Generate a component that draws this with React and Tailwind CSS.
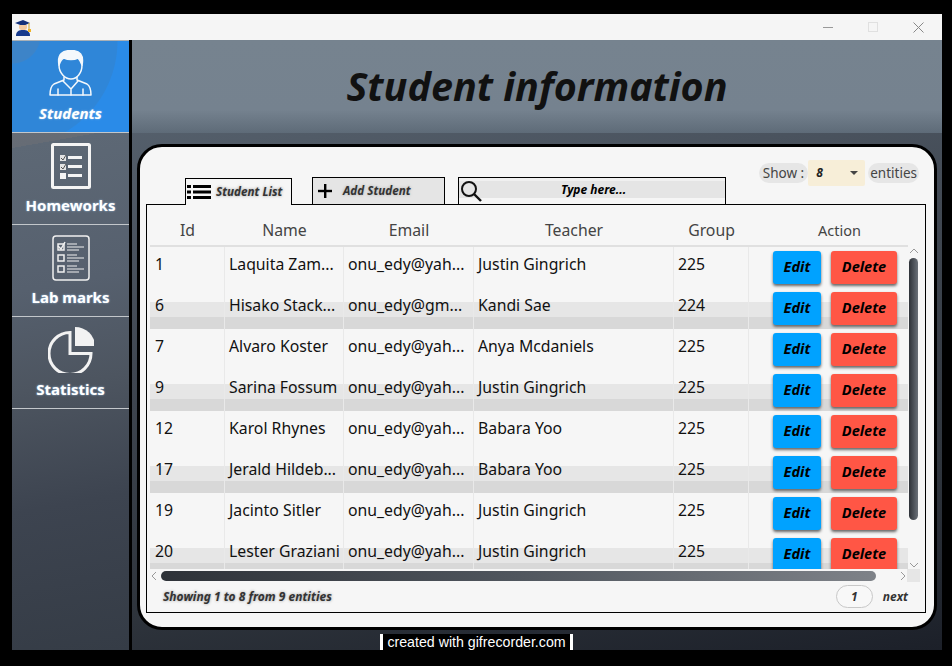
const rows = [
  ["1", "Laquita Zam...", "onu_edy@yah...", "Justin Gingrich", "225"],
  ["6", "Hisako Stack...", "onu_edy@gm...", "Kandi Sae", "224"],
  ["7", "Alvaro Koster", "onu_edy@yah...", "Anya Mcdaniels", "225"],
  ["9", "Sarina Fossum", "onu_edy@yah...", "Justin Gingrich", "225"],
  ["12", "Karol Rhynes", "onu_edy@yah...", "Babara Yoo", "225"],
  ["17", "Jerald Hildeb...", "onu_edy@yah...", "Babara Yoo", "225"],
  ["19", "Jacinto Sitler", "onu_edy@yah...", "Justin Gingrich", "225"],
  ["20", "Lester Graziani", "onu_edy@yah...", "Justin Gingrich", "225"],
];

const cols = "grid grid-cols-[75px_119px_130px_200px_75px_159px]";

function CapIcon() {
  return (
    <svg width="18" height="17" viewBox="0 0 18 17">
      <path d="M1 4 L9 1 L16 4 L9 7 Z" fill="#12307a" />
      <path d="M5 6 L13 6 L13 9 C12 12 6 12 5 9 Z" fill="#f1c9a0" />
      <path d="M2 17 C2 12 5 11 9 11 C13 11 16 12 16 17 Z" fill="#173a8c" />
      <path d="M15 4 L15 10" stroke="#c9a227" strokeWidth="1" />
      <rect x="14" y="10" width="3" height="3" fill="#f0b429" />
    </svg>
  );
}

function StudentIcon() {
  return (
    <svg width="44" height="46" viewBox="0 0 44 46" fill="none" stroke="#f4f8fc" strokeWidth="1.5" strokeLinejoin="round" strokeLinecap="round">
      <path d="M10 15 C10 23 16 29 22 29 C28 29 33 23 33 15" />
      <path d="M10 15 C8 4 14 0.5 22 0.5 C31 0.5 35 5 33 15 C32 12 31 10 29 8 C25 10 19 10 15 8 C12 9 11 12 10 15 Z" fill="#f4f8fc" />
      <path d="M15 27 L15 30 L5 34 C2 36 1 39 1 45 L42 45 C42 39 41 36 38 34 L28 30 L28 27" />
      <path d="M14 31 L22 39 L29 31 M22 39 L22 45 M9 39 L9 45 M34 39 L34 45" />
    </svg>
  );
}

function HomeworkIcon() {
  return (
    <svg width="40" height="46" viewBox="0 0 40 46">
      <rect x="1.5" y="1.5" width="37" height="43" rx="1" fill="none" stroke="#f4f4f4" strokeWidth="3" />
      <rect x="9" y="12" width="6" height="6" fill="#e4e4e4" />
      <rect x="9" y="21" width="6" height="6" fill="#e4e4e4" />
      <rect x="9" y="30" width="6" height="6" fill="#f4f4f4" />
      <path d="M10 15 L12 17 L15 12 M10 24 L12 26 L15 21" stroke="#555" strokeWidth="1" fill="none" />
      <rect x="17" y="13" width="14" height="3" fill="#f4f4f4" />
      <rect x="17" y="22" width="14" height="3" fill="#f4f4f4" />
      <rect x="17" y="31" width="14" height="3" fill="#f4f4f4" />
    </svg>
  );
}

function LabIcon() {
  return (
    <svg width="38" height="46" viewBox="0 0 38 46" fill="none" stroke="#f0f0f0">
      <rect x="1" y="1" width="36" height="44" rx="3" strokeWidth="1.5" />
      <rect x="6" y="9" width="6" height="6" strokeWidth="1.5" />
      <rect x="6" y="20" width="6" height="6" strokeWidth="1.5" />
      <rect x="6" y="31" width="6" height="6" strokeWidth="1.5" />
      <path d="M6 11 L9 14 L13 7" strokeWidth="1.5" />
      <path d="M15 9 H25 M15 12 H32 M15 15 H27 M15 20 H25 M15 23 H32 M15 26 H27 M15 31 H25 M15 34 H32 M15 37 H27" strokeWidth="1.2" />
    </svg>
  );
}

function PieIcon() {
  return (
    <svg width="46" height="46" viewBox="0 0 46 46">
      <path d="M22 5.5 A21 21 0 1 0 43 26.5 L22 26.5 Z" fill="none" stroke="#f2f2f2" strokeWidth="3" />
      <path d="M27 0 A20 19 0 0 1 47 19 L27 19 Z" fill="#f2f2f2" />
    </svg>
  );
}

function NavItem({ icon, label, active }) {
  return (
    <div className={`flex h-[92px] flex-col items-center border-b border-[#c3c7cb] ${active ? "bg-[radial-gradient(circle_at_0_-6px,#3d84c8_28px,transparent_29px),radial-gradient(circle_at_0_0,#2f86d8_105px,transparent_106px),linear-gradient(#2a8be8,#2a8be8)] pt-[9px]" : "pt-[10px]"}`}>
      {icon}
      <span className={`absolute text-[15px] leading-5 font-bold text-white [text-shadow:0_0_2px_#9cc4e8] ${active ? "mt-[53px] italic" : "mt-[52px]"}`}>{label}</span>
    </div>
  );
}

function ListIcon() {
  return (
    <svg width="24" height="14" viewBox="0 0 24 14" fill="#000">
      <rect x="0" y="0" width="4" height="3" />
      <rect x="0" y="5.5" width="4" height="3" />
      <rect x="0" y="11" width="4" height="3" />
      <rect x="6" y="0" width="18" height="3" />
      <rect x="6" y="5.5" width="18" height="3" />
      <rect x="6" y="11" width="18" height="3" />
    </svg>
  );
}

function Row({ row }) {
  const striped = ["6", "9", "17", "20"].includes(row[0]);
  return (
    <div className={`relative h-[41px] w-[758px] shrink-0 ${cols} text-[15.8px] leading-[22px] text-[#111]`}>
      {striped && (
        <div className="absolute inset-x-0 top-[14px] h-[27px] bg-[linear-gradient(#e6e6e6_0,#e6e6e6_15px,#d8d8d8_15px,#d8d8d8_100%)]" />
      )}
      {row.map((cell, i) => (
        <div key={i} className={`relative z-10 truncate border-r border-[#e9e9e9] pt-[6px] ${i === 0 ? "pl-[5px]" : "pl-[4px]"}`}>{cell}</div>
      ))}
      <div className="relative z-10 flex gap-[10px] pt-[4px] pl-[24px] text-[14.5px] leading-[31px] font-bold italic text-black">
        <button className="h-[33px] w-[48px] rounded-[3px] bg-[#00a2ff] pb-[2px] shadow-[0_2px_3px_#666]">Edit</button>
        <button className="h-[33px] w-[66px] rounded-[3px] bg-[#ff5645] pb-[2px] shadow-[0_2px_3px_#666]">Delete</button>
      </div>
    </div>
  );
}

export default function App() {
  return (
    <div className="relative h-[666px] w-[952px] overflow-hidden bg-black pt-[14px] pl-[12px] font-['Noto_Sans',sans-serif]">
      <div className="flex h-[636px] w-[930px] flex-col">
        <div className="flex h-[26px] shrink-0 items-center justify-between bg-[#f5f5f5] pr-[18px] pl-[2px]">
          <CapIcon />
          <div className="flex items-center gap-[35px]">
            <div className="h-px w-[10px] bg-[#999]" />
            <div className="h-[10px] w-[10px] border border-[#e0e0e0]" />
            <svg width="11" height="11" viewBox="0 0 11 11" stroke="#888" strokeWidth="1"><path d="M0.5 0.5 L10.5 10.5 M10.5 0.5 L0.5 10.5" /></svg>
          </div>
        </div>

        <div className="flex min-h-0 flex-1">
          <nav className="w-[117px] shrink-0 border-t border-[#a9b0b6] bg-[linear-gradient(170deg,#6c7079_0,#666c75_17%,#5d6875_17%,#56606e_40%,#4d5560_56%,#3d4450_75%,#353c46_100%)]">
            <NavItem active label="Students" icon={<StudentIcon />} />
            <NavItem label="Homeworks" icon={<HomeworkIcon />} />
            <NavItem label="Lab marks" icon={<LabIcon />} />
            <NavItem label="Statistics" icon={<PieIcon />} />
          </nav>
          <div className="w-[3px] shrink-0 bg-black" />

          <main className="flex min-w-0 flex-1 flex-col bg-[linear-gradient(170deg,#5c6875_0,#3f4650_45%,#2f353d_75%,#1c2029_100%)]">
            <header className="flex h-[93px] shrink-0 items-center justify-center bg-[linear-gradient(#76838f_0,#75828f_75%,#5e6b78_100%)]">
              <h1 className="text-[39.5px] leading-none font-bold italic text-[#111]">Student information</h1>
            </header>

            <div className="mt-[11px] ml-[5px] flex h-[486px] w-[800px] flex-col rounded-[25px] border-[3px] border-black bg-[#f6f6f6] pl-[6px]">
              <div className="relative flex h-[57px] shrink-0 items-end">
                <div className="relative z-10 -mb-px ml-[39px] flex h-[27px] w-[107px] items-center gap-[5px] border border-b-0 border-black bg-[#f6f6f6] pl-[1px] text-[11.7px] font-bold italic text-[#333] [text-shadow:0_0_3px_#999]">
                  <ListIcon />
                  <span>Student List</span>
                </div>
                <div className="ml-[20px] flex h-[27px] w-[133px] items-center border border-b-0 border-black bg-[#e5e5e5] pl-[5px] text-[11.7px] font-bold italic text-[#333] [text-shadow:0_0_3px_#aaa]">
                  <svg width="14" height="14" viewBox="0 0 14 14" fill="#000"><rect x="6" y="0" width="2.4" height="14" /><rect x="0" y="5.8" width="14" height="2.4" /></svg>
                  <span className="ml-[11px]">Add Student</span>
                </div>
                <div className="ml-[13px] flex h-[27px] w-[268px] border border-b-0 border-black bg-[linear-gradient(#f0f0f0_0,#f0f0f0_3px,#e5e5e5_3px,#e5e5e5_20px,#f6f6f6_20px)]">
                  <svg className="mt-[2px] ml-[1px]" width="22" height="22" viewBox="0 0 22 22" fill="none" stroke="#111" strokeWidth="2"><circle cx="9" cy="9" r="7" /><path d="M14 14 L21 21" strokeWidth="2.4" /></svg>
                  <span className="ml-[79px] pt-[3px] text-[12px] leading-[18px] font-bold italic text-black">Type here...</span>
                </div>
                <div className="absolute top-[13px] right-[15px] flex items-center text-[13.5px] text-[#444]">
                  <span className="rounded-full bg-[#e6e6e6] px-[4px] leading-[20px]">Show :</span>
                  <div className="flex h-[26px] w-[57px] items-center justify-between rounded-[2px] bg-[#f7eed8] pr-[7px] pl-[8px] text-[12px] font-bold italic text-[#222]">
                    <span>8</span>
                    <span className="h-0 w-0 border-x-[4px] border-t-[4px] border-x-transparent border-t-[#444]" />
                  </div>
                  <span className="ml-[3px] rounded-full bg-[#e6e6e6] px-[2px] leading-[20px]">entities</span>
                </div>
              </div>

              <div className="flex h-[409px] w-[780px] flex-col border border-black pl-[3px]">
                <div className={`${cols} h-[42px] w-[758px] shrink-0 border-b-2 border-[#e0e0e0] pt-[14px] text-center text-[15.8px] leading-[22px] text-[#444]`}>
                  <span>Id</span>
                  <span>Name</span>
                  <span>Email</span>
                  <span>Teacher</span>
                  <span>Group</span>
                  <span className="pl-[22px] text-[14.5px]">Action</span>
                </div>

                <div className="relative h-[322px] shrink-0 overflow-hidden">
                  <div className="flex flex-col">
                    {rows.map((row) => <Row key={row[0]} row={row} />)}
                  </div>
                  <div className="absolute top-[11px] left-[759px] h-[262px] w-[9px] rounded-full bg-[linear-gradient(90deg,#2e3238,#6a7078)]" />
                  <svg className="absolute top-[1px] left-[759px]" width="10" height="6" viewBox="0 0 10 6" fill="none" stroke="#999"><path d="M1 5 L5 1 L9 5" /></svg>
                  <svg className="absolute top-[315px] left-[759px]" width="10" height="6" viewBox="0 0 10 6" fill="none" stroke="#999"><path d="M1 1 L5 5 L9 1" /></svg>
                </div>

                <div className="relative flex h-[13px] shrink-0 items-center">
                  <svg className="ml-[1px]" width="6" height="10" viewBox="0 0 6 10" fill="none" stroke="#999"><path d="M5 1 L1 5 L5 9" /></svg>
                  <div className="ml-[4px] h-[10px] w-[715px] rounded-full bg-[linear-gradient(90deg,#2e3238,#50565e_50%,#7e8288)]" />
                  <svg className="ml-[24px]" width="6" height="10" viewBox="0 0 6 10" fill="none" stroke="#999"><path d="M1 1 L5 5 L1 9" /></svg>
                  <div className="ml-[1px] h-[13px] w-[13px] bg-[#e6e6e6]" />
                </div>

                <div className="flex h-[29px] shrink-0 items-center pr-[17px] pl-[13px] text-[12px] font-bold italic text-[#333]">
                  <span className="[text-shadow:0_0_3px_#999]">Showing 1 to 8 from 9 entities</span>
                  <div className="ml-auto flex h-[23px] w-[37px] items-center justify-center rounded-full border border-[#c8c8c8] bg-[#f8f8f8]">1</div>
                  <span className="ml-[10px]">next</span>
                </div>
              </div>
            </div>
          </main>
        </div>
      </div>

      <div className="absolute top-[634px] left-[380px] h-[16px] w-[193px] border-x-[3px] border-white bg-black text-center font-['Liberation_Sans',sans-serif] text-[14.2px] leading-[16px] text-white">
        created with gifrecorder.com
      </div>
    </div>
  );
}
